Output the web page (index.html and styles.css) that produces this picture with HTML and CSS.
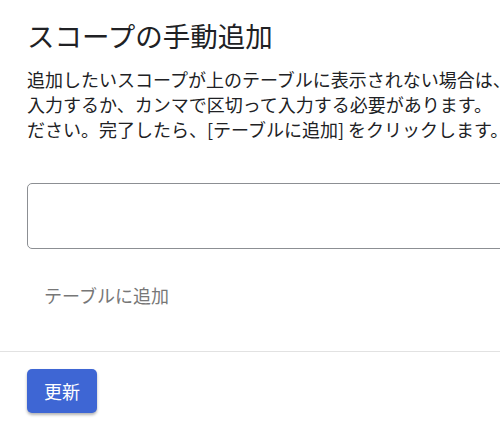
FILE: index.html
```html
<!DOCTYPE html>
<html lang="ja">
<head>
<meta charset="utf-8">
<title>スコープの手動追加</title>
<link rel="stylesheet" href="styles.css">
</head>
<body>
<div class="page">
  <section class="panel">
    <h1 class="title">スコープの手動追加</h1>
    <p class="desc">追加したいスコープが上のテーブルに表示されない場合は、<br>入力するか、カンマで区切って入力する必要があります。<br>ださい。完了したら、[テーブルに追加] をクリックします。</p>
    <div class="field"><textarea class="input" aria-label="スコープ"></textarea></div>
    <div class="actions"><button class="text-btn" type="button">テーブルに追加</button></div>
  </section>
  <footer class="footer">
    <button class="primary-btn" type="button">更新</button>
  </footer>
</div>
</body>
</html>
```

FILE: styles.css
```css
html, body {
  margin: 0;
  padding: 0;
  overflow: hidden;
  background: #ffffff;
}
body {
  font-family: "Noto Sans CJK JP", "Noto Sans", sans-serif;
  color: #202124;
}
.page {
  width: 500px;
  height: 430px;
  display: flex;
  flex-direction: column;
}
.panel {
  padding: 15px 0 0 27px;
  border-bottom: 1px solid #e2e2e2;
  height: 352px;
  box-sizing: border-box;
}
.title {
  margin: 0;
  font-size: 27.5px;
  font-weight: 400;
  line-height: 40px;
  white-space: nowrap;
}
.desc {
  margin: 12px 0 0;
  font-size: 18px;
  line-height: 25px;
  white-space: nowrap;
  color: #202124;
}
.field {
  margin-top: 41px;
  width: 560px;
}
.input {
  display: block;
  box-sizing: border-box;
  width: 100%;
  height: 66px;
  border: 1px solid #8c8f93;
  border-radius: 5px;
  resize: none;
  outline: none;
  font: inherit;
  padding: 10px 14px;
}
.actions {
  margin-top: 28px;
}
.text-btn {
  font-family: inherit;
  font-size: 18px;
  color: #777777;
  background: none;
  border: none;
  padding: 0 17px;
  height: 36px;
  cursor: pointer;
}
.footer {
  padding: 17px 0 0 27px;
}
.primary-btn {
  width: 70px;
  height: 44px;
  border: none;
  border-radius: 5px;
  background: #3e66d4;
  color: #ffffff;
  font-family: inherit;
  font-size: 18px;
  box-shadow: 0 2px 3px rgba(0, 0, 0, 0.3);
  cursor: pointer;
}
```
